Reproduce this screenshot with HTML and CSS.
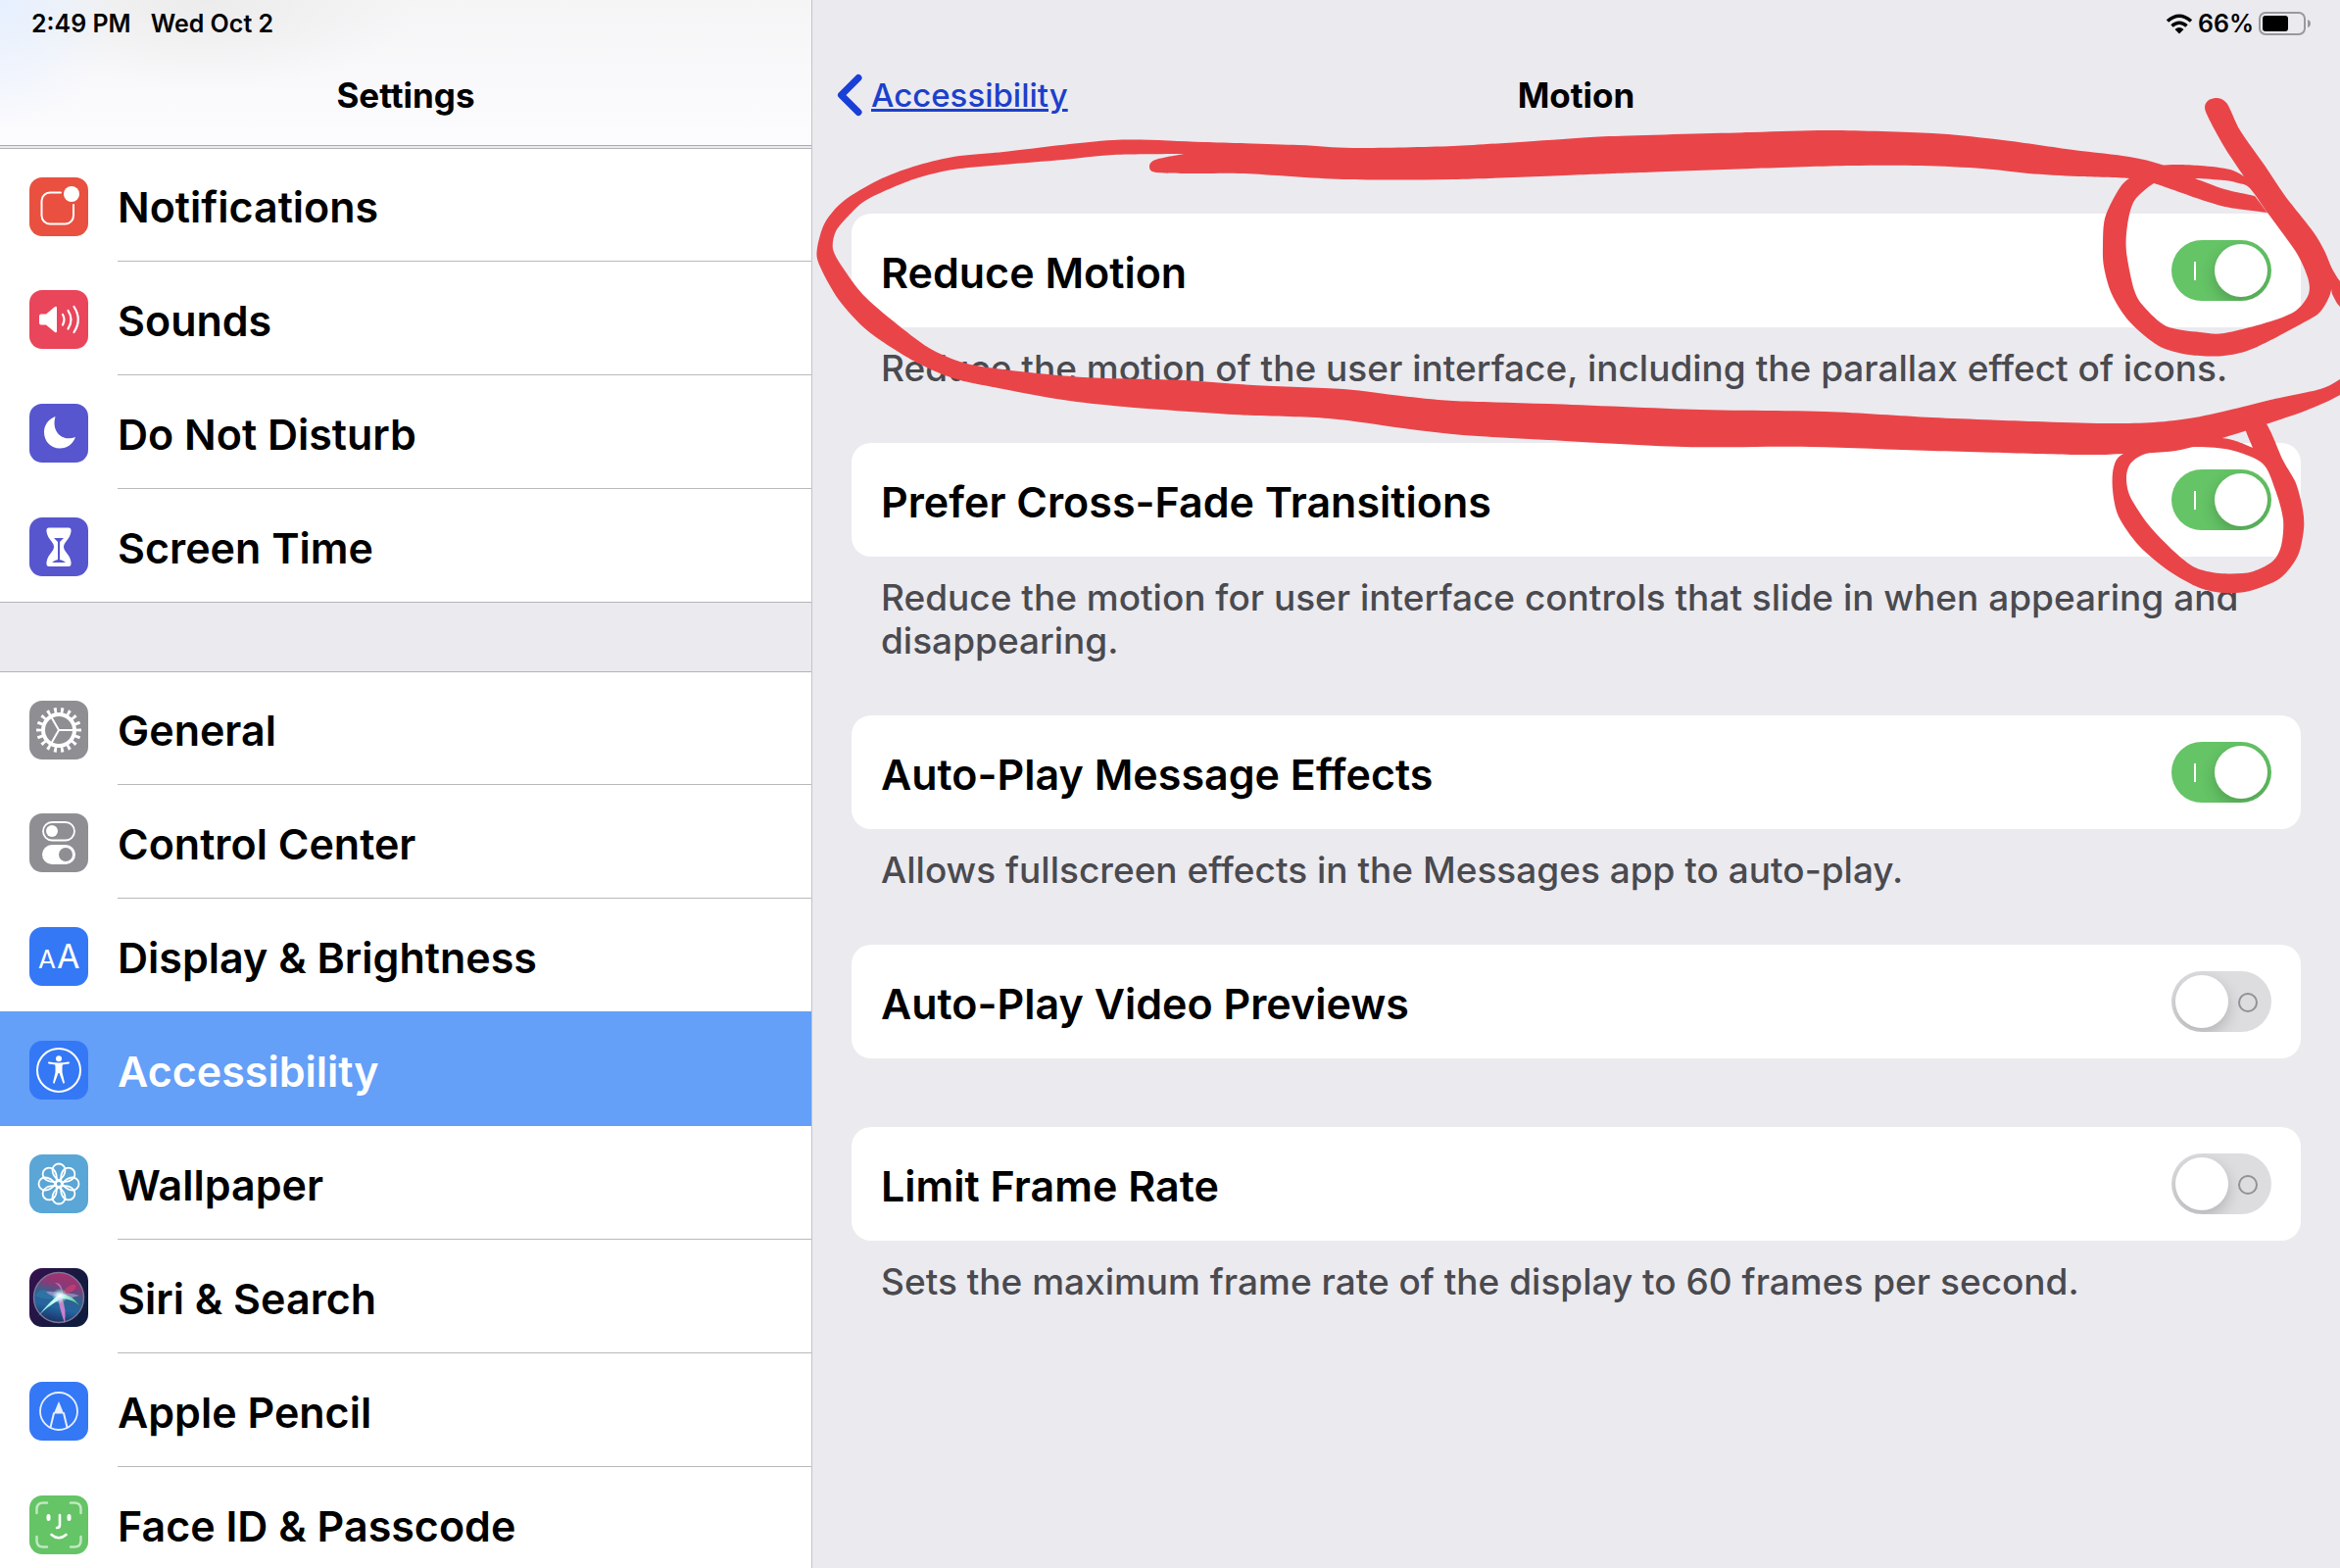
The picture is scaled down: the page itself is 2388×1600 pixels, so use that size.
FILE: index.html
```html
<!DOCTYPE html>
<html lang="en">
<head>
<meta charset="utf-8">
<meta name="viewport" content="width=device-width, initial-scale=1">
<title>Settings</title>
<link rel="stylesheet" href="styles.css">
</head>
<body>
<div class="app">
  <aside class="sidebar">
    <header class="sidebar-head">
      <div class="status"><span>2:49 PM</span><span>Wed Oct 2</span></div>
      <h1 class="title">Settings</h1>
    </header>
    <nav class="menu" aria-label="Settings">
      <div class="group">
        <a class="row" href="#notifications">
          <svg class="icon red" viewBox="0 0 60 60" aria-hidden="true"><path d="M32 15.500H21a8.500 8.500 0 0 0-8.500 8.500v15a8.500 8.500 0 0 0 8.500 8.500h15.500a8.500 8.500 0 0 0 8.500-8.500V28" class="line"/><circle cx="43" cy="17" r="8" fill="#fff"/></svg>
          <span class="label">Notifications</span>
        </a>
        <a class="row" href="#sounds">
          <svg class="icon pink" viewBox="0 0 60 60" aria-hidden="true"><path d="M12 24.500h5l9-7.500q2-1 2 1v24q0 2-2 1l-9-7.500h-5q-2 0-2-2v-7q0-2 2-2z" fill="#fff"/><path d="M34 25q3 5 0 10.500M39.500 21q6 9 0 18.500M45.500 17q8.500 13 0 26" class="line" stroke-width="2.200"/></svg>
          <span class="label">Sounds</span>
        </a>
        <a class="row" href="#dnd">
          <svg class="icon indigo" viewBox="0 0 60 60" aria-hidden="true"><path d="M26.500 13C19 16 15 22 15 29c0 9.500 7 16.500 16 16.500 7.500 0 13.500-4.500 16-11.500C34 39 22 29 26.500 13z" fill="#fff"/></svg>
          <span class="label">Do Not Disturb</span>
        </a>
        <a class="row" href="#screen-time">
          <svg class="icon indigo" viewBox="0 0 60 60" aria-hidden="true"><path d="M20 10.500h20q3 0 2.500 4C41.500 22 35 25 35 30s6.500 8 7.500 15.500q.5 4.500-2.500 4.500H20q-3 0-2.500-4.500C18.500 38 25 35 25 30s-6.500-8-7.500-15.500q-.5-4 2.500-4z" fill="#fff"/><path d="M25 21h10l-4 4v18q3 .5 6 3H23q3-2.500 6-3V25z" fill="#5756ce"/></svg>
          <span class="label">Screen Time</span>
        </a>
      </div>
      <div class="group">
        <a class="row" href="#general">
          <svg class="icon gray" viewBox="0 0 60 60" aria-hidden="true"><circle cx="30" cy="30" r="20" fill="none" stroke="#fff" stroke-width="6" pathLength="36" stroke-dasharray=".8 1.200" stroke-dashoffset=".4"/><circle cx="30" cy="30" r="16" class="line" stroke-width="4"/><path d="M30 30h16M30 30l-8-14M30 30l-8 14" class="line"/></svg>
          <span class="label">General</span>
        </a>
        <a class="row" href="#control-center">
          <svg class="icon gray" viewBox="0 0 60 60" aria-hidden="true"><rect x="14" y="9" width="32" height="18.500" rx="9.200" class="line" stroke-width="1.800"/><circle cx="23" cy="18" r="6" fill="#fff"/><rect x="13" y="32" width="34" height="20" rx="10" fill="#fff"/><circle cx="37" cy="42" r="7" fill="#8e8e93"/></svg>
          <span class="label">Control Center</span>
        </a>
        <a class="row" href="#display">
          <svg class="icon blue" viewBox="0 0 60 60" aria-hidden="true"><text x="9" y="42" font-size="26" class="glyph">A</text><text x="28" y="42" font-size="34" class="glyph">A</text></svg>
          <span class="label">Display &amp; Brightness</span>
        </a>
        <a class="row selected" href="#accessibility" aria-current="page">
          <svg class="icon blue" viewBox="0 0 60 60" aria-hidden="true"><circle cx="30" cy="30" r="22" class="line"/><circle cx="30" cy="18.200" r="3" fill="#fff"/><path d="M20 22.500q10 2 20 0M27 24.500h6" class="line"/><path d="M26.500 23.500h7V32l2.500 11-1.500.8L30.500 33h-1l-4 10.800L24 43l2.500-11z" fill="#fff"/></svg>
          <span class="label">Accessibility</span>
        </a>
        <a class="row" href="#wallpaper">
          <svg class="icon sky" viewBox="0 0 60 60" aria-hidden="true"><g class="line" stroke-width="1.800"><circle cx="30" cy="30" r="3"/><path id="petal" d="M30 26.500C26.500 24 23.500 20 23.500 16a6.500 6.500 0 0 1 13 0C36.500 20 33.500 24 30 26.500z"/><use href="#petal" transform="rotate(45 30 30)"/><use href="#petal" transform="rotate(90 30 30)"/><use href="#petal" transform="rotate(135 30 30)"/><use href="#petal" transform="rotate(180 30 30)"/><use href="#petal" transform="rotate(225 30 30)"/><use href="#petal" transform="rotate(270 30 30)"/><use href="#petal" transform="rotate(315 30 30)"/></g></svg>
          <span class="label">Wallpaper</span>
        </a>
        <a class="row" href="#siri">
          <svg class="icon siri" viewBox="0 0 60 60" aria-hidden="true">
            <defs>
              <linearGradient id="orb" x1=".62" y1="0" x2=".38" y2="1"><stop offset="0" stop-color="#a8306c"/><stop offset=".25" stop-color="#8a3a78"/><stop offset=".45" stop-color="#34618c"/><stop offset=".7" stop-color="#2565a0"/><stop offset="1" stop-color="#1a2f62"/></linearGradient>
              <radialGradient id="glow"><stop offset="0" stop-color="#fff"/><stop offset=".4" stop-color="#e0f5ff" stop-opacity=".8"/><stop offset="1" stop-color="#7fd" stop-opacity="0"/></radialGradient>
              <linearGradient id="mint"><stop offset="0" stop-color="#5fe6d0"/><stop offset=".5" stop-color="#eaffff"/><stop offset="1" stop-color="#3fc795"/></linearGradient>
            </defs>
            <circle cx="30" cy="30" r="25.500" fill="url(#orb)" stroke="#7d7698" stroke-width="1.400"/>
            <path d="M6 28q6-12 24 1Q20 35 6 28z" fill="#2a83b5" opacity=".5"/>
            <path d="M31 29Q40 15 47 17q3 6-16 12z" fill="#e83c6a" opacity=".6"/>
            <path d="M17 24q14-1 16 5-12 1-16-5z" fill="#c9a0e0" opacity=".6"/>
            <path d="M26 15q8-1 8 13Q32 18 26 15z" fill="#d58fd0" opacity=".6"/>
            <path d="M31 27q10-3 20 1-8 3-20 2z" fill="#c2a2d8" opacity=".6"/>
            <path d="M32 26Q21 33 9 49q9-10 24-18 12 1 18 7-8-11-19-12z" fill="url(#mint)"/>
            <path d="M29 30q2 12 7 26 2-14-3-26z" fill="#dd86cf" opacity=".9"/>
            <circle cx="31" cy="28.500" r="8" fill="url(#glow)"/>
          </svg>
          <span class="label">Siri &amp; Search</span>
        </a>
        <a class="row" href="#pencil">
          <svg class="icon blue" viewBox="0 0 60 60" aria-hidden="true"><g opacity=".88"><circle cx="30" cy="30" r="19" class="line" stroke-width="1.800"/><path d="M30 20l5.200 12.500h-10.400z" fill="#fff"/><path d="M25 32l-3.500 14.500M35 32l3.500 14.500" class="line"/></g></svg>
          <span class="label">Apple Pencil</span>
        </a>
        <a class="row" href="#face-id">
          <svg class="icon green" viewBox="0 0 60 60" aria-hidden="true"><path d="M7.500 18v-4q0-6.500 6.500-6.500h4M42 7.500h4q6.500 0 6.500 6.500v4M52.500 42v4q0 6.500-6.500 6.500h-4M18 52.500h-4q-6.500 0-6.500-6.500v-4" class="line" stroke-width="2.500" opacity=".6"/><path d="M19.500 21v3M40.500 21v3" class="line" stroke-width="4"/><path d="M31 20v10q0 3-3 3" class="line" stroke-width="2.600"/><path d="M22.500 40q7.500 6.500 15 0" class="line" stroke-width="2.600"/></svg>
          <span class="label">Face ID &amp; Passcode</span>
        </a>
      </div>
    </nav>
  </aside>

  <main class="detail">
    <div class="status status-end">
      <svg class="wifi" viewBox="0 0 28 22" aria-label="Wi-Fi"><path d="M2 8.500q12-10.500 24 0M6.500 13.500q7.500-6.500 15 0" fill="none" stroke="#000" stroke-width="3.600"/><path d="M9.500 17q4.500-4 9 0L14 21.500z"/></svg>
      <span>66%</span>
      <svg class="battery" viewBox="0 0 54 24" aria-label="Battery"><rect x="1" y="1" width="46" height="22" rx="6" fill="none" stroke="#98989d" stroke-width="2"/><rect x="4" y="4" width="26" height="16" rx="3"/><path d="M50 8q3 1 3 4t-3 4z" fill="#98989d"/></svg>
    </div>
    <header class="detail-head">
      <a class="back" href="#accessibility"><svg class="chevron" viewBox="0 0 28 44" aria-hidden="true"><path d="M23 4.500L5.500 22 23 39.500" fill="none" stroke="#1a3fd6" stroke-width="7" stroke-linecap="round" stroke-linejoin="round"/></svg><span>Accessibility</span></a>
      <h2 class="title">Motion</h2>
    </header>
    <form class="options">
      <section class="option">
        <div class="card"><label for="reduce">Reduce Motion</label><input class="switch" type="checkbox" id="reduce" checked></div>
        <p class="note">Reduce the motion of the user interface, including the parallax effect of icons.</p>
      </section>
      <section class="option">
        <div class="card"><label for="fade">Prefer Cross-Fade Transitions</label><input class="switch" type="checkbox" id="fade" checked></div>
        <p class="note">Reduce the motion for user interface controls that slide in when appearing and disappearing.</p>
      </section>
      <section class="option">
        <div class="card"><label for="effects">Auto-Play Message Effects</label><input class="switch" type="checkbox" id="effects" checked></div>
        <p class="note">Allows fullscreen effects in the Messages app to auto-play.</p>
      </section>
      <section class="option plain">
        <div class="card"><label for="previews">Auto-Play Video Previews</label><input class="switch" type="checkbox" id="previews"></div>
      </section>
      <section class="option">
        <div class="card"><label for="limit">Limit Frame Rate</label><input class="switch" type="checkbox" id="limit"></div>
        <p class="note">Sets the maximum frame rate of the display to 60 frames per second.</p>
      </section>
    </form>
  </main>
  <svg class="ink" viewBox="0 0 2388 1600" aria-hidden="true"></svg>
</div>
<script src="ink.js"></script>
</body>
</html>
```
FILE: styles.css
```css
*, *::before, *::after { box-sizing: border-box; }

body {
  margin: 0;
  font-family: Inter, "Liberation Sans", sans-serif;
  color: #000;
  background: #ebeaef;
}

.app {
  position: relative;
  display: grid;
  grid-template-columns: 829fr 1559fr;
  height: 100vh;
  overflow: hidden;
}

/* Status line */
.status {
  display: flex;
  align-items: center;
  gap: 20px;
  height: 48px;
  padding: 0 32px;
  font-size: 25px;
  font-weight: 600;
}
.status-end { justify-content: flex-end; gap: 5px; padding-right: 29px; }
.wifi { width: 28px; height: 22px; }
.battery { width: 54px; height: 24px; }

.title {
  margin: 0;
  font-size: 35px;
  line-height: 44px;
  font-weight: 700;
  text-align: center;
}

/* Sidebar */
.sidebar {
  display: flex;
  flex-direction: column;
  min-height: 0;
  border-right: 1px solid #c4c4c8;
}
.sidebar-head {
  flex: none;
  height: 149px;
  border-bottom: 1px solid #a9a9ae;
  background:
    radial-gradient(ellipse 120px 130px at 0 0, #e6f0ff, transparent),
    radial-gradient(ellipse 220px 90px at 210px 0, #ececec, transparent),
    linear-gradient(#f5f5f6, #fcfcff);
}
.sidebar-head .title { padding-top: 27px; }
.menu {
  display: flex;
  flex-direction: column;
  gap: 70px;
  padding-top: 2px;
  overflow-y: auto;
  scrollbar-width: none;
}
.group { background: #fff; }
.row {
  display: flex;
  align-items: center;
  gap: 30px;
  height: 116px;
  padding-left: 30px;
  color: inherit;
  text-decoration: none;
  font-size: 43px;
  font-weight: 600;
}
.row:first-child { border-top: 1px solid #b4b4b8; }
.row:last-child { border-bottom: 1px solid #b4b4b8; }
.label {
  flex: 1;
  display: flex;
  align-items: center;
  align-self: stretch;
  padding-top: 4px;
  border-bottom: 1px solid #b9b9bc;
}
.row:last-child .label { border-bottom: 0; }
.row.selected {
  position: relative;
  height: 117px;
  margin-top: -1px;
  color: #fff;
  background: #649ff8;
}
.selected .label { border-bottom: 0; }

.icon { flex: none; width: 60px; height: 60px; margin-top: 2px; border-radius: 13px; }
.red { background: #e9503f; }
.pink { background: #e9455b; }
.indigo { background: #5756ce; }
.gray { background: #8e8e93; }
.blue { background: #3478f6; }
.sky { background: #5aa6d6; }
.green { background: #65c466; }
.siri { background: linear-gradient(120deg, #38104f, #101b3d 70%); }
.line { fill: none; stroke: #fff; stroke-linecap: round; }
.line:not([stroke-width]) { stroke-width: 2px; }
.glyph { fill: #fff; font-weight: 400; }

/* Detail pane */
.detail-head {
  display: grid;
  grid-template-columns: 1fr auto 1fr;
  align-items: center;
  height: 98px;
  padding: 0 24px;
}
.back {
  display: flex;
  align-items: center;
  gap: 8px;
  color: #1c40cc;
  font-size: 33px;
  line-height: 44px;
  font-weight: 500;
  text-decoration: none;
}
.back span { text-decoration: underline; text-decoration-thickness: 3px; }
.chevron { width: 28px; height: 44px; }

.options { padding: 72px 40px 0; }
.option { padding-bottom: 54px; }
.option.plain { padding-bottom: 70px; }
.card {
  display: flex;
  align-items: center;
  justify-content: space-between;
  height: 116px;
  padding: 0 30px;
  border-radius: 20px;
  background: #fff;
  font-size: 43px;
  font-weight: 600;
}
.card label { padding-top: 4px; }
.note {
  margin: 0;
  padding: 20px 30px 0;
  color: #4a4a4f;
  font-size: 37px;
  line-height: 44px;
  font-weight: 550;
}

.switch {
  appearance: none;
  position: relative;
  width: 102px;
  height: 62px;
  margin: 0;
  border-radius: 31px;
  background: #dddde0;
  overflow: hidden;
}
.switch::before {
  content: "";
  position: absolute;
  top: 4px;
  left: 4px;
  width: 54px;
  height: 54px;
  border-radius: 50%;
  background: #fff;
  box-shadow: 0 6px 16px rgba(0, 0, 0, .2);
}
.switch::after {
  content: "";
  position: absolute;
  top: 22px;
  left: 68px;
  width: 20px;
  height: 20px;
  border: 2px solid #929295;
  border-radius: 50%;
}
.switch:checked { background: #65c466; }
.switch:checked::before { left: 44px; }
.switch:checked::after {
  left: 23px;
  width: 2px;
  height: 19px;
  border: 0;
  border-radius: 0;
  background: #fff;
}

/* Marker strokes over the page */
.ink {
  position: absolute;
  top: 0;
  left: 0;
  width: 100%;
  pointer-events: none;
  fill: #e94549;
}
```
FILE: ink.js
```js
// Outlines of the marker strokes. A repeated point makes a sharp corner.
const strokes = [
  // wide loop around the first option
  [[1136,143,1024,155,973,160,932,170,896,184,861,205,842,227,834,253,836,270,856,306,886,338,932,368,973,386,1024,397,1085,408,1147,415,1259,423,1356,427,1432,437,1493,444,1580,449,1719,456,1848,456,1972,460,2121,464,2167,463,2220,460,2268,447,2312,433,2353,419,2388,403,2420,380,2420,340,2410,330,2388,313,2380,300,2380,300,2374,262,2374,262,2388,287,2420,320,2440,350,2400,380,2388,387,2368,397,2317,408,2281,417,2240,426,2198,431,2147,432,2075,430,1972,426,1863,420,1735,418,1580,412,1483,409,1430,404,1371,397,1279,393,1208,388,1106,385,1024,377,983,370,948,355,912,328,881,301,860,273,850,254,853,236,867,219,886,203,932,183,973,173,1024,168,1085,163,1136,158,1208,157,1208,157,1179,163,1173,170,1180,176,1223,177,1269,177,1371,183,1483,183,1620,178,1673,176,1786,172,1889,169,1961,169,2023,172,2070,177,2121,180,2173,182,2198,187,2250,205,2276,212,2314,217,2314,217,2301,200,2301,200,2270,193,2240,182,2206,168,2173,160,2116,153,2044,143,1972,136,1869,133,1786,135,1642,139,1580,143,1483,149,1381,151,1325,148,1228,145]],
  // slash that turns into the ring around the first switch
  [[2263,100,2273,106,2286,133,2312,170,2332,200,2361,237,2374,260,2380,280,2378,300,2368,318,2353,328,2301,355,2270,363,2234,362,2203,353,2173,328,2155,300,2147,272,2146,250,2148,223,2160,197,2173,182,2206,169,2245,169,2276,173,2290,180,2290,180,2270,150,2251,114,2253,103],
   [2296,192,2314,217,2343,257,2355,283,2356,300,2343,317,2317,328,2270,340,2245,339,2211,333,2188,313,2178,296,2170,257,2171,230,2178,205,2198,187,2215,182,2240,182,2270,184,2285,187]],
  // ring around the second switch
  [[2290,430,2311,430,2330,470,2343,493,2350,520,2351,540,2345,567,2327,590,2296,603,2270,605,2245,600,2214,583,2183,557,2162,527,2156,500,2157,477,2167,463,2210,450,2268,447,2299,457,2299,457],
   [2237,456,2193,462,2175,472,2170,487,2174,507,2193,536,2219,563,2240,579,2265,585,2296,584,2319,573,2328,557,2330,530,2322,500,2309,473,2276,459]]
];

// Closed Catmull-Rom curve through a flat list of x,y pairs.
function outline(flat) {
  const p = [];
  for (let i = 0; i < flat.length; i += 2) p.push([flat[i], flat[i + 1]]);
  const n = p.length;
  let d = `M${p[0]}`;
  for (let i = 0; i < n; i++) {
    const a = p[(i + n - 1) % n], b = p[i], c = p[(i + 1) % n], e = p[(i + 2) % n];
    if (b[0] === c[0] && b[1] === c[1]) continue;
    const c1 = [0, 1].map(k => b[k] + (c[k] - a[k]) / 7);
    const c2 = [0, 1].map(k => c[k] - (e[k] - b[k]) / 7);
    d += `C${c1} ${c2} ${c}`;
  }
  return d + "Z";
}

const ink = document.querySelector(".ink");
for (const rings of strokes) {
  const path = document.createElementNS("http://www.w3.org/2000/svg", "path");
  path.setAttribute("d", rings.map(outline).join(""));
  path.setAttribute("fill-rule", "evenodd");
  ink.append(path);
}
```
